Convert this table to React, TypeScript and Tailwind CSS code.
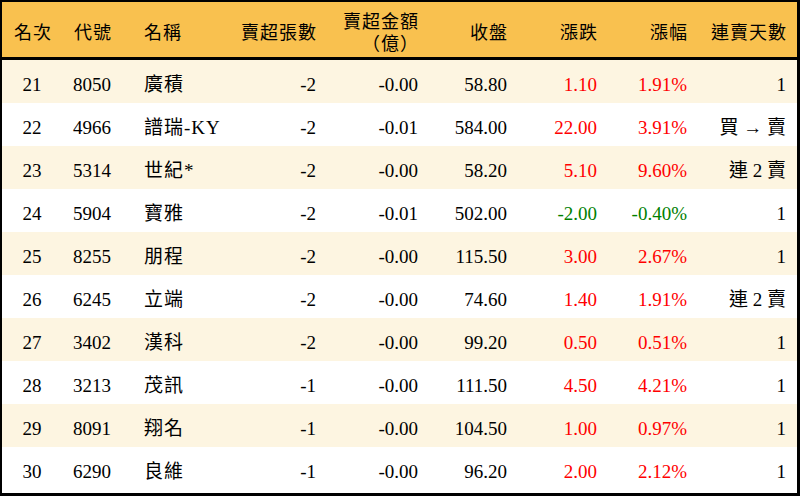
import React from 'react';

type Row = {
  rank: number;
  code: string;
  name: string;
  lots: string;
  amount: string;
  close: string;
  change: string;
  pct: string;
  days: string;
};

const rows: Row[] = [
  { rank: 21, code: '8050', name: '廣積', lots: '-2', amount: '-0.00', close: '58.80', change: '1.10', pct: '1.91%', days: '1' },
  { rank: 22, code: '4966', name: '譜瑞-KY', lots: '-2', amount: '-0.01', close: '584.00', change: '22.00', pct: '3.91%', days: '買 → 賣' },
  { rank: 23, code: '5314', name: '世紀*', lots: '-2', amount: '-0.00', close: '58.20', change: '5.10', pct: '9.60%', days: '連 2 賣' },
  { rank: 24, code: '5904', name: '寶雅', lots: '-2', amount: '-0.01', close: '502.00', change: '-2.00', pct: '-0.40%', days: '1' },
  { rank: 25, code: '8255', name: '朋程', lots: '-2', amount: '-0.00', close: '115.50', change: '3.00', pct: '2.67%', days: '1' },
  { rank: 26, code: '6245', name: '立端', lots: '-2', amount: '-0.00', close: '74.60', change: '1.40', pct: '1.91%', days: '連 2 賣' },
  { rank: 27, code: '3402', name: '漢科', lots: '-2', amount: '-0.00', close: '99.20', change: '0.50', pct: '0.51%', days: '1' },
  { rank: 28, code: '3213', name: '茂訊', lots: '-1', amount: '-0.00', close: '111.50', change: '4.50', pct: '4.21%', days: '1' },
  { rank: 29, code: '8091', name: '翔名', lots: '-1', amount: '-0.00', close: '104.50', change: '1.00', pct: '0.97%', days: '1' },
  { rank: 30, code: '6290', name: '良維', lots: '-1', amount: '-0.00', close: '96.20', change: '2.00', pct: '2.12%', days: '1' },
];

const font = { fontFamily: '"Liberation Serif", "Noto Sans CJK TC", serif' };

export default function App() {
  return (
    <div
      className="w-[800px] h-[496px] bg-white border-t-2 border-l-2 border-r-[3px] border-b-[3px] border-black text-black overflow-hidden"
      style={font}
    >
      {/* Header */}
      <div className="flex h-[58px] pt-[6px] bg-[#f9c14f] border-b-[3px] border-black text-[18px] tracking-[1px] leading-[22px]">
        <div className="w-[60px] flex items-center justify-center pl-[2px]">名次</div>
        <div className="w-[60px] flex items-center justify-center pl-[2px]">代號</div>
        <div className="w-[118px] flex items-center pl-[22px]">名稱</div>
        <div className="w-[86px] flex items-center justify-end pr-[9px]">賣超張數</div>
        <div className="w-[102px] flex flex-col items-end justify-center pr-[9px]">
          <span>賣超金額</span>
          <span>（億）</span>
        </div>
        <div className="w-[89px] flex items-center justify-end pr-[9px]">收盤</div>
        <div className="w-[90px] flex items-center justify-end pr-[9px]">漲跌</div>
        <div className="w-[90px] flex items-center justify-end pr-[9px]">漲幅</div>
        <div className="flex-1 flex items-center justify-end pr-[10px]">連賣天數</div>
      </div>

      {/* Body */}
      {rows.map((r, i) => {
        const up = !r.change.startsWith('-');
        const color = up ? 'text-[#ff0000]' : 'text-[#008000]';
        return (
          <div
            key={r.rank}
            className={`flex h-[43px] pt-[7px] items-center text-[19px] ${i % 2 === 0 ? 'bg-[#fdf5e1]' : 'bg-white'}`}
          >
            <div className="w-[60px] text-center">{r.rank}</div>
            <div className="w-[60px] text-center">{r.code}</div>
            <div className="w-[118px] pl-[22px] tracking-[1px] whitespace-nowrap">{r.name}</div>
            <div className="w-[86px] text-right pr-[10px]">{r.lots}</div>
            <div className="w-[102px] text-right pr-[10px]">{r.amount}</div>
            <div className="w-[89px] text-right pr-[10px]">{r.close}</div>
            <div className={`w-[90px] text-right pr-[10px] ${color}`}>{r.change}</div>
            <div className={`w-[90px] text-right pr-[10px] ${color}`}>{r.pct}</div>
            <div className="flex-1 text-right pr-[11px] whitespace-nowrap">{r.days}</div>
          </div>
        );
      })}
    </div>
  );
}
